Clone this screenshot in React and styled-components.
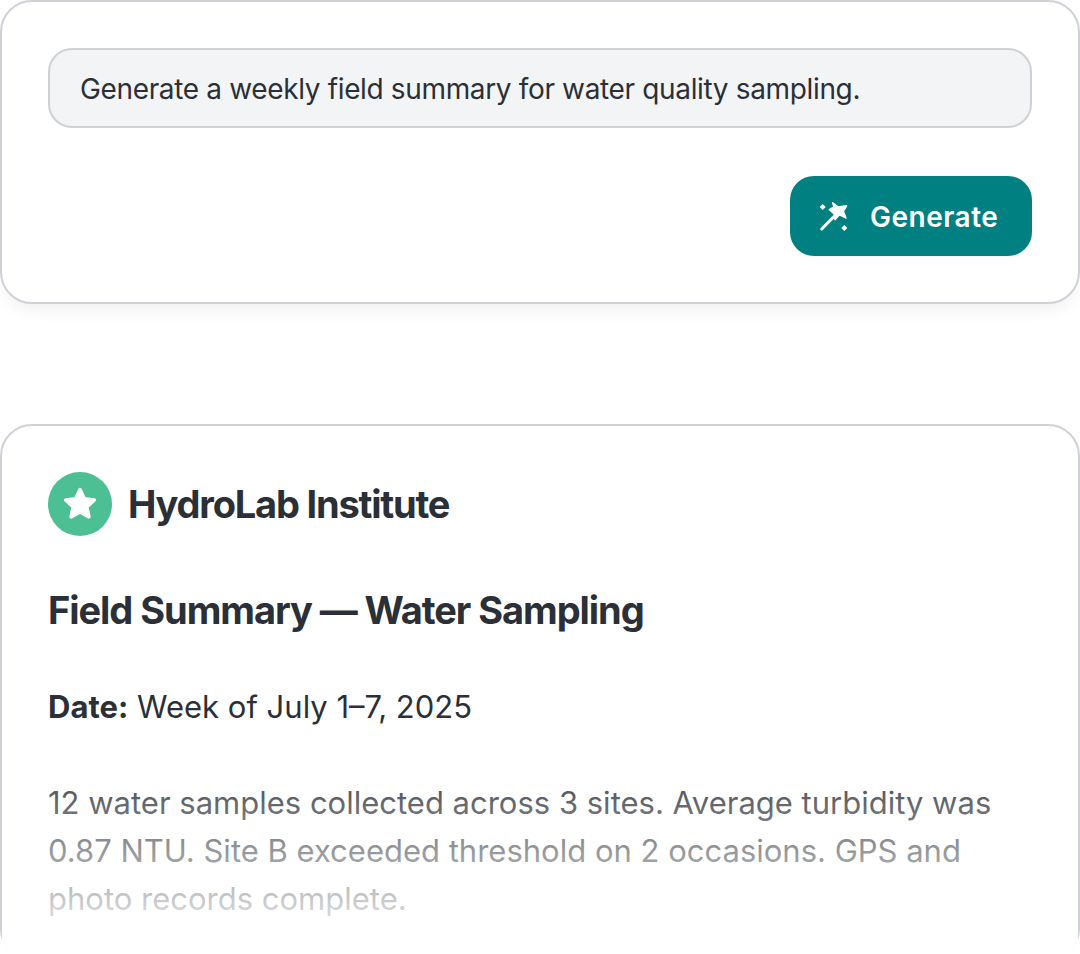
import React from "react";
import styled, { createGlobalStyle } from "styled-components";

const Global = createGlobalStyle`
  html, body { margin: 0; padding: 0; background: #fff; height: 954px; overflow: hidden; }
  * { box-sizing: border-box; }
  body { font-family: "Inter", "Noto Sans", sans-serif; color: #2b3038; }
`;

const Page = styled.main`
  position: relative;
  width: 1080px;
  height: 954px;
  overflow: hidden;
  display: flex;
  flex-direction: column;
  gap: 120px;
`;

const Card = styled.section`
  flex: none;
  background: #fff;
  border: 2px solid #ced2d7;
  border-radius: 32px;
  padding: 46px 46px ${(p) => (p.$raised ? "46px" : "36px")};
  box-shadow: ${(p) => (p.$raised ? "0 10px 16px -4px rgba(0,0,0,0.06)" : "none")};
`;

const Prompt = styled.div`
  height: 80px;
  display: flex;
  align-items: center;
  padding: 2px 30px 0;
  background: #f3f4f6;
  border: 2px solid #ced2d7;
  border-radius: 24px;
  font-size: 28px;
  letter-spacing: -0.35px;
  color: #2b3038;
  white-space: nowrap;
`;

const Actions = styled.div`
  display: flex;
  justify-content: flex-end;
  margin-top: 48px;
`;

const GenerateButton = styled.button`
  width: 242px;
  height: 80px;
  display: flex;
  align-items: center;
  gap: 20px;
  padding: 2px 0 0 28px;
  border: 0;
  border-radius: 24px;
  background: #008080;
  color: #fff;
  font: 600 28px "Inter", sans-serif;
  letter-spacing: 0.5px;
`;

const Brand = styled.div`
  display: flex;
  align-items: center;
  gap: 16px;
`;

const Badge = styled.div`
  width: 64px;
  height: 64px;
  border-radius: 50%;
  background: #4cbf94;
  display: flex;
  align-items: center;
  justify-content: center;
`;

const BrandName = styled.div`
  font-size: 38px;
  font-weight: 700;
  letter-spacing: -1.2px;
  color: #2b3038;
`;

const Title = styled.h1`
  margin: 48px 0 0;
  font-size: 38px;
  line-height: 52px;
  font-weight: 700;
  letter-spacing: -1.05px;
  color: #2b3038;
`;

const DateLine = styled.p`
  margin: 47px 0 0;
  font-size: 31px;
  line-height: 48px;
  color: #2b3038;
  b { font-weight: 700; }
`;

const Body = styled.p`
  margin: 48px 0 0;
  font-size: 31px;
  line-height: 48px;
  color: #2b3038;
`;

const Fade = styled.div`
  position: absolute;
  left: 2px;
  right: 2px;
  bottom: 0;
  height: 206px;
  background: linear-gradient(to bottom, rgba(255,255,255,0), #fff);
  pointer-events: none;
`;

const Wand = () => (
  <svg width="32" height="32" viewBox="0 0 32 32" fill="#fff" style={{ flex: "none" }}>
    <path stroke="#fff" strokeWidth="1.500" strokeLinejoin="round" d="M14.700 1.800L20.300 6L28.700 4.700L25.300 10.300L28 17L21.300 13.700L17 18.700L16 12.700L11.300 8.700L16 6z" />
    <path stroke="#fff" strokeWidth="3" strokeLinecap="round" d="M3.700 28L16 15.500" />
    <path d="M4.700 3l3 3-3 3-3-3z" />
    <path d="M26.300 24l3 3-3 3-3-3z" />
  </svg>
);

const Star = () => (
  <svg width="36" height="36" viewBox="0 0 36 36">
    <path
      fill="#fff"
      stroke="#fff"
      strokeWidth="3.500"
      strokeLinejoin="round"
      d="M18 3.500l4.300 9.300 10 1.200-7.400 6.900 2 10-8.900-5-8.900 5 2-10-7.400-6.900 10-1.200z"
    />
  </svg>
);

export default function App() {
  return (
    <Page>
      <Global />
      <Card $raised>
        <Prompt>Generate a weekly field summary for water quality sampling.</Prompt>
        <Actions>
          <GenerateButton>
            <Wand />
            Generate
          </GenerateButton>
        </Actions>
      </Card>
      <Card>
        <Brand>
          <Badge><Star /></Badge>
          <BrandName>HydroLab Institute</BrandName>
        </Brand>
        <Title>Field Summary — Water Sampling</Title>
        <DateLine><b>Date:</b> Week of July 1–7, 2025</DateLine>
        <Body>
          12 water samples collected across 3 sites. Average turbidity was 0.87 NTU. Site B exceeded threshold on 2 occasions. GPS and photo records complete.
        </Body>
      </Card>
      <Fade />
    </Page>
  );
}
